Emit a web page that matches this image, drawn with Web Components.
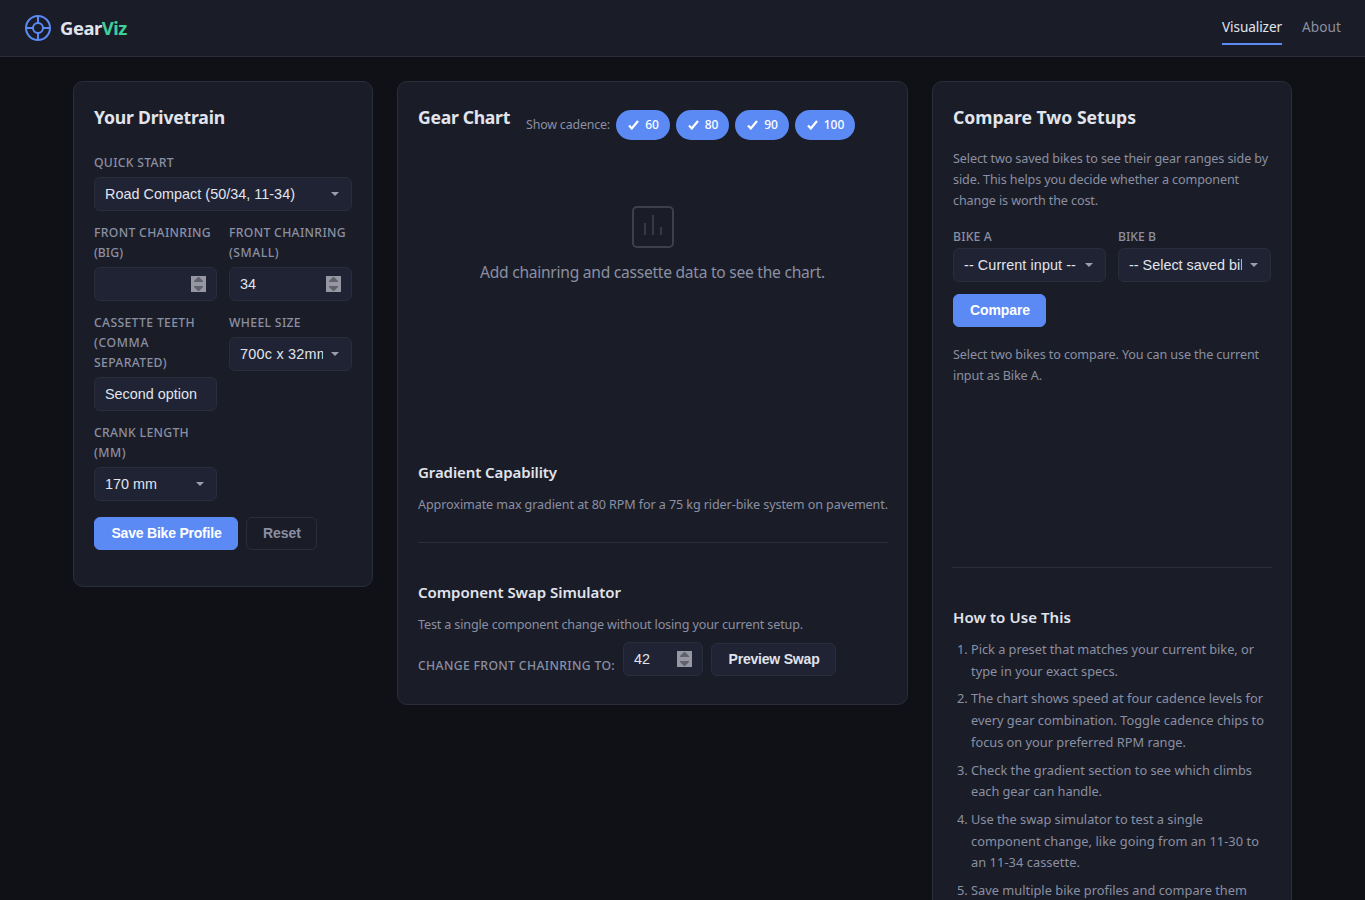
<!DOCTYPE html>
<html lang="en">
<head>
<meta charset="UTF-8">
<title>GearViz</title>
<style>
  :root {
    --bg: #0f1117;
    --surface: #1a1d27;
    --field: #1f2333;
    --border: #2a2e3b;
    --text: #e1e4ed;
    --muted: #8b8fa3;
    --accent: #5b8af5;
    --green: #3ecf9a;
    --ui: "Noto Sans", sans-serif;
    --control: "Liberation Sans", Arial, sans-serif;
  }

  body {
    margin: 0;
    height: 900px;
    overflow: hidden;
    background: var(--bg);
    color: var(--text);
    font-family: var(--ui);
  }

  main {
    display: grid;
    grid-template-columns: 300px 511px 360px;
    gap: 24px;
    justify-content: center;
    align-items: start;
    box-sizing: border-box;
    height: 843px;
    overflow: hidden;
    padding-top: 24px;
  }
</style>
</head>
<body>
  <site-header></site-header>
  <main>
    <drivetrain-panel></drivetrain-panel>
    <chart-panel></chart-panel>
    <compare-panel></compare-panel>
  </main>

<script>
class SiteHeader extends HTMLElement {
  constructor() {
    super();
    this.attachShadow({ mode: 'open' }).innerHTML = `
      <style>
        :host {
          display: flex;
          align-items: center;
          justify-content: space-between;
          box-sizing: border-box;
          height: 57px;
          padding: 0 24px;
          background: var(--surface);
          border-bottom: 1px solid var(--border);
        }
        .brand { display: flex; align-items: center; gap: 8px; font-size: 18.4px; font-weight: 700; }
        .brand svg { display: block; }
        .brand text-line { padding-bottom: 2px; }
        .brand span { color: var(--green); }
        nav { display: flex; gap: 20px; font-size: 13.6px; line-height: 22px; color: var(--muted); }
        nav a { padding: 4px 0 5px; border-bottom: 2px solid transparent; }
        nav a.active { color: var(--text); border-color: var(--accent); }
      </style>
      <div class="brand">
        <svg width="28" height="28" viewBox="0 0 28 28" fill="none" stroke="#5b8af5" stroke-width="2">
          <circle cx="14" cy="14" r="12"/>
          <circle cx="14" cy="14" r="5"/>
          <path d="M14 2v7M14 19v7M2 14h7M19 14h7"/>
        </svg>
        <text-line measure="67">Gear<span>Viz</span></text-line>
      </div>
      <nav>
        <a class="active"><text-line measure="60">Visualizer</text-line></a>
        <a><text-line measure="39">About</text-line></a>
      </nav>
    `;
  }
}

class PanelCard extends HTMLElement {
  constructor() {
    super();
    this.attachShadow({ mode: 'open' }).innerHTML = `
      <style>
        :host {
          display: block;
          box-sizing: border-box;
          padding: 20px;
          background: var(--surface);
          border: 1px solid var(--border);
          border-radius: 10px;
        }
      </style>
      <slot></slot>
    `;
  }
}

class FieldGroup extends HTMLElement {
  constructor() {
    super();
    this.attachShadow({ mode: 'open' }).innerHTML = `
      <style>
        :host { display: block; }
        .label {
          padding-top: 1px;
          margin-bottom: 4px;
          color: var(--muted);
          font-size: 12.2px;
          font-weight: 500;
          line-height: 20px;
        }
      </style>
      <div class="label"><slot name="label"></slot></div>
      <slot></slot>
    `;
  }
}

class FormField extends HTMLElement {
  constructor() {
    super();
    const type = this.getAttribute('type');
    const marks = {
      select: '<svg width="8" height="4" viewBox="0 0 8 4"><path d="M0 0h8L4 4z" fill="#9a9eac"/></svg>',
      number: `<svg width="15" height="16" viewBox="0 0 15 16">
        <path d="M0 0h15v16H0z" fill="#9697a2"/>
        <path d="M3 6V5l4-4h1l4 4v1zM3 10h9v1l-4 4H7l-4-4z" fill="#5f626c"/>
      </svg>`
    };
    this.attachShadow({ mode: 'open' }).innerHTML = `
      <style>
        :host {
          display: flex;
          align-items: center;
          box-sizing: border-box;
          height: 34px;
          padding: 0 10px;
          background: var(--field);
          border: 1px solid var(--border);
          border-radius: 6px;
          color: var(--text);
          font: 14.4px/20px var(--control);
        }
        :host([type="select"]) { padding-right: 12px; }
        .value { flex: 1; min-width: 0; overflow: hidden; white-space: nowrap; }
        :host([type="select"]) .value { margin-right: 8px; }
        svg { display: block; flex: none; }
      </style>
      <div class="value"><slot></slot></div>
      ${marks[type] || ''}
    `;
  }
}

class UiButton extends HTMLElement {
  constructor() {
    super();
    this.attachShadow({ mode: 'open' }).innerHTML = `
      <style>
        :host {
          display: flex;
          align-items: center;
          justify-content: center;
          box-sizing: border-box;
          height: 33px;
          padding: 0 0 2px 1px;
          border: 1px solid var(--border);
          border-radius: 6px;
          color: var(--muted);
          font: 700 14px/20px var(--control);
        }
        :host([kind="primary"]) { background: var(--accent); border-color: var(--accent); color: #fff; }
        :host([kind="secondary"]) { background: var(--field); color: var(--text); }
      </style>
      <slot></slot>
    `;
  }
}

class CadenceChip extends HTMLElement {
  constructor() {
    super();
    this.attachShadow({ mode: 'open' }).innerHTML = `
      <style>
        :host {
          display: flex;
          align-items: center;
          justify-content: center;
          gap: 6px;
          box-sizing: border-box;
          height: 30px;
          padding-left: 1px;
          border-radius: 15px;
          background: var(--accent);
          color: #fff;
          font-size: 12px;
          font-weight: 500;
          line-height: 20px;
        }
        svg { display: block; }
      </style>
      <svg width="11" height="10" viewBox="0 0 11 10" fill="none" stroke="#fff" stroke-width="2.2">
        <path d="M1 5.500 3.800 8.500 10 1"/>
      </svg>
      <slot></slot>
    `;
  }
}

class DrivetrainPanel extends HTMLElement {
  constructor() {
    super();
    this.attachShadow({ mode: 'open' }).innerHTML = `
      <style>
        :host { display: block; }
        panel-card { height: 506px; }
        h2 { margin: 1px 0 21px; font-size: 17.6px; font-weight: 700; line-height: 28px; }
        .quick { margin-bottom: 11px; }
        .grid { display: grid; grid-template-columns: 123px 123px; gap: 11px 12px; }
        .actions { display: flex; gap: 8px; margin-top: 16px; }
        .save { width: 144px; }
        .reset { width: 71px; }
      </style>
      <panel-card>
        <h2><text-line measure="131">Your Drivetrain</text-line></h2>
        <field-group class="quick">
          <text-line slot="label" measure="80">QUICK START</text-line>
          <form-field type="select"><text-line measure="190">Road Compact (50/34, 11-34)</text-line></form-field>
        </field-group>
        <div class="grid">
          <field-group>
            <text-line slot="label" measure="117">FRONT CHAINRING</text-line>
            <text-line slot="label" measure="29">(BIG)</text-line>
            <form-field type="number"></form-field>
          </field-group>
          <field-group>
            <text-line slot="label" measure="117">FRONT CHAINRING</text-line>
            <text-line slot="label" measure="50">(SMALL)</text-line>
            <form-field type="number">34</form-field>
          </field-group>
          <field-group>
            <text-line slot="label" measure="101">CASSETTE TEETH</text-line>
            <text-line slot="label" measure="55">(COMMA</text-line>
            <text-line slot="label" measure="73">SEPARATED)</text-line>
            <form-field><text-line measure="92">Second option</text-line></form-field>
          </field-group>
          <field-group>
            <text-line slot="label" measure="72">WHEEL SIZE</text-line>
            <form-field type="select"><text-line measure="89">700c x 32mm</text-line></form-field>
          </field-group>
          <field-group>
            <text-line slot="label" measure="95">CRANK LENGTH</text-line>
            <text-line slot="label" measure="32">(MM)</text-line>
            <form-field type="select"><text-line measure="52">170 mm</text-line></form-field>
          </field-group>
        </div>
        <div class="actions">
          <ui-button class="save" kind="primary"><text-line measure="110">Save Bike Profile</text-line></ui-button>
          <ui-button class="reset"><text-line measure="38">Reset</text-line></ui-button>
        </div>
      </panel-card>
    `;
  }
}

class ChartPanel extends HTMLElement {
  constructor() {
    super();
    this.attachShadow({ mode: 'open' }).innerHTML = `
      <style>
        :host { display: block; }
        panel-card { height: 624px; }
        .top { display: flex; height: 56px; }
        h2 { margin: 1px 16px 0 0; font-size: 17.6px; font-weight: 700; line-height: 28px; }
        .cadence {
          display: flex;
          align-items: center;
          gap: 6px;
          height: 30px;
          margin-top: 8px;
          color: var(--muted);
          font-size: 12.4px;
        }
        .cadence text-line { padding-bottom: 2px; }
        .c60, .c90 { width: 54px; }
        .c80 { width: 53px; }
        .c100 { width: 60px; }
        .empty {
          display: flex;
          flex-direction: column;
          align-items: center;
          gap: 9px;
          box-sizing: border-box;
          height: 301px;
          padding-top: 45px;
          color: var(--muted);
          font-size: 15.6px;
          line-height: 24px;
        }
        .empty svg { display: block; }
        h3 { margin: 0; font-size: 15px; font-weight: 600; line-height: 26px; }
        p { margin: 9px 0 0; color: var(--muted); font-size: 12.6px; line-height: 22px; }
        hr { height: 1px; margin: 26px -1px 36px 0; border: 0; background: var(--border); }
        .swap { display: flex; gap: 8px; margin-top: 6px; }
        .swap label {
          align-self: flex-end;
          color: var(--muted);
          font-size: 12.2px;
          font-weight: 500;
          line-height: 20px;
        }
        .swap form-field { width: 80px; }
        .swap ui-button { width: 125px; margin-top: 1px; }
      </style>
      <panel-card>
        <div class="top">
          <h2><text-line measure="92">Gear Chart</text-line></h2>
          <div class="cadence">
            <text-line measure="84">Show cadence:</text-line>
            <cadence-chip class="c60">60</cadence-chip>
            <cadence-chip class="c80">80</cadence-chip>
            <cadence-chip class="c90">90</cadence-chip>
            <cadence-chip class="c100">100</cadence-chip>
          </div>
        </div>
        <div class="empty">
          <svg width="48" height="48" viewBox="0 0 48 48" fill="none" stroke="#3d404c" stroke-width="2">
            <rect x="4" y="4" width="40" height="40" rx="4"/>
            <path d="M16 32V20M24 32V12M32 32v-8" stroke="#363944"/>
          </svg>
          <text-line measure="345">Add chainring and cassette data to see the chart.</text-line>
        </div>
        <h3><text-line measure="139">Gradient Capability</text-line></h3>
        <p><text-line measure="470">Approximate max gradient at 80 RPM for a 75 kg rider-bike system on pavement.</text-line></p>
        <hr>
        <h3><text-line measure="203">Component Swap Simulator</text-line></h3>
        <p><text-line measure="385">Test a single component change without losing your current setup.</text-line></p>
        <div class="swap">
          <label><text-line measure="197">CHANGE FRONT CHAINRING TO:</text-line></label>
          <form-field type="number">42</form-field>
          <ui-button kind="secondary"><text-line measure="91">Preview Swap</text-line></ui-button>
        </div>
      </panel-card>
    `;
  }
}

class ComparePanel extends HTMLElement {
  constructor() {
    super();
    this.attachShadow({ mode: 'open' }).innerHTML = `
      <style>
        :host { display: block; }
        panel-card { height: 860px; }
        h2 { margin: 1px 0 17px; font-size: 17.6px; font-weight: 700; line-height: 28px; }
        p { margin: 0; color: var(--muted); font-size: 12.6px; line-height: 21px; }
        .bikes { display: grid; grid-template-columns: 153px 153px; gap: 12px; margin: 15px 0 12px; }
        .bikes div { margin-top: -3px; }
        ui-button { width: 93px; margin-bottom: 17px; }
        hr { height: 1px; margin: 181px -1px 36px; border: 0; background: var(--border); }
        h3 { margin: 0 0 9px; font-size: 15px; font-weight: 600; line-height: 26px; }
        ol {
          margin: 0;
          padding-left: 18px;
          color: var(--muted);
          font-size: 12.8px;
          line-height: 21.7px;
        }
        li { margin-bottom: 6px; }
      </style>
      <panel-card>
        <h2><text-line measure="183">Compare Two Setups</text-line></h2>
        <p>
          <text-line measure="315">Select two saved bikes to see their gear ranges side by</text-line>
          <text-line measure="286">side. This helps you decide whether a component</text-line>
          <text-line measure="145">change is worth the cost.</text-line>
        </p>
        <div class="bikes">
          <field-group>
            <text-line slot="label" measure="39">BIKE A</text-line>
            <div><form-field type="select"><text-line measure="112">-- Current input --</text-line></form-field></div>
          </field-group>
          <field-group>
            <text-line slot="label" measure="38">BIKE B</text-line>
            <div><form-field type="select">-- Select saved bike --</form-field></div>
          </field-group>
        </div>
        <ui-button kind="primary"><text-line measure="60">Compare</text-line></ui-button>
        <p>
          <text-line measure="306">Select two bikes to compare. You can use the current</text-line>
          <text-line measure="89">input as Bike A.</text-line>
        </p>
        <hr>
        <h3><text-line measure="118">How to Use This</text-line></h3>
        <ol>
          <li>
            <text-line measure="283">Pick a preset that matches your current bike, or</text-line>
            <text-line measure="147">type in your exact specs.</text-line>
          </li>
          <li>
            <text-line measure="292">The chart shows speed at four cadence levels for</text-line>
            <text-line measure="293">every gear combination. Toggle cadence chips to</text-line>
            <text-line measure="215">focus on your preferred RPM range.</text-line>
          </li>
          <li>
            <text-line measure="281">Check the gradient section to see which climbs</text-line>
            <text-line measure="131">each gear can handle.</text-line>
          </li>
          <li>
            <text-line measure="232">Use the swap simulator to test a single</text-line>
            <text-line measure="288">component change, like going from an 11-30 to</text-line>
            <text-line measure="109">an 11-34 cassette.</text-line>
          </li>
          <li>
            <text-line measure="276">Save multiple bike profiles and compare them</text-line>
          </li>
        </ol>
      </panel-card>
    `;
  }
}

// One unbroken line of text, tracked so that it fills `measure` pixels.
class TextLine extends HTMLElement {
  constructor() {
    super();
    this.attachShadow({ mode: 'open' }).innerHTML = `
      <style>
        :host { display: block; width: max-content; white-space: nowrap; }
      </style>
      <slot></slot>
    `;
  }

  connectedCallback() {
    const measure = parseFloat(this.getAttribute('measure'));
    const count = this.textContent.length;
    const natural = this.getBoundingClientRect().width;
    this.style.letterSpacing = `${(measure - natural) / count}px`;
  }
}

customElements.define('site-header', SiteHeader);
customElements.define('panel-card', PanelCard);
customElements.define('field-group', FieldGroup);
customElements.define('form-field', FormField);
customElements.define('ui-button', UiButton);
customElements.define('cadence-chip', CadenceChip);
customElements.define('drivetrain-panel', DrivetrainPanel);
customElements.define('chart-panel', ChartPanel);
customElements.define('compare-panel', ComparePanel);
// last, so that every inherited font is in place when lines are measured
customElements.define('text-line', TextLine);
</script>
</body>
</html>
